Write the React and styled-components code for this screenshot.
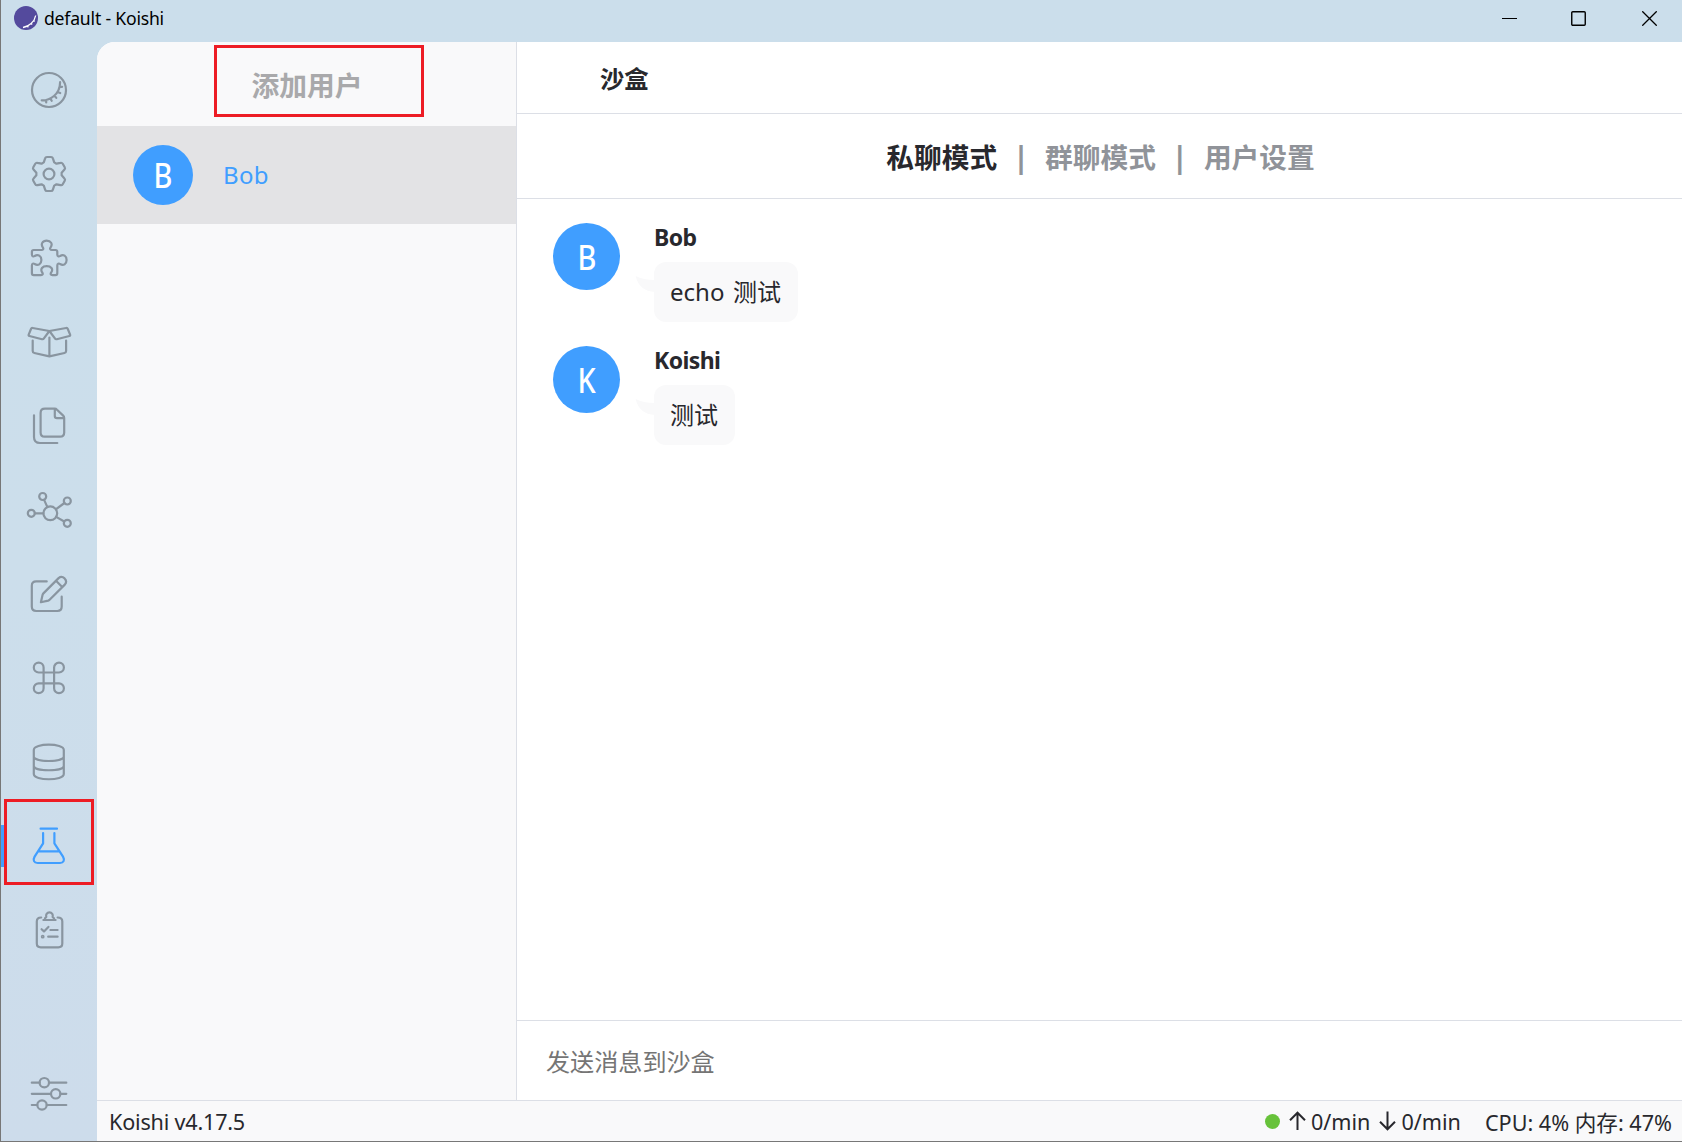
import React from 'react';
import styled, { createGlobalStyle } from 'styled-components';

const Global = createGlobalStyle`
  * { box-sizing: border-box; }
  body {
    margin: 0;
    overflow: hidden;
    font-family: "Noto Sans", "Noto Sans CJK SC", sans-serif;
    color: #28282d;
  }
`;

const Window = styled.div`
  width: 1682px;
  height: 1142px;
  display: flex;
  flex-direction: column;
  border-left: 1px solid #777;
  border-bottom: 1px solid #777;
  background: linear-gradient(180deg, #cbdeeb 0%, #ccdeeb 50%, #cddceb 100%);
`;

const TitleBar = styled.header`
  height: 42px;
  flex: none;
  display: flex;
  align-items: flex-start;
  justify-content: space-between;
  padding-left: 13px;
`;

const Brand = styled.div`
  display: flex;
  align-items: center;
  height: 36px;
  gap: 6px;
  color: #000;
  font-size: 17.6px;
  letter-spacing: -0.2px;
`;

const Controls = styled.div`
  display: flex;
  height: 37px;
  align-items: center;
`;

const Control = styled.div`
  width: ${(p) => p.$width}px;
  display: flex;
  justify-content: center;
`;

const Body = styled.div`
  flex: 1;
  display: flex;
  min-height: 0;
`;

const Nav = styled.nav`
  width: 96px;
  flex: none;
  display: flex;
  flex-direction: column;
  padding: 6px 0 5px;
`;

const NavItem = styled.div`
  position: relative;
  height: 84px;
  display: flex;
  align-items: center;
  justify-content: center;
  color: ${(p) => (p.$active ? '#409eff' : '#8995a0')};
  margin-top: ${(p) => (p.$last ? 'auto' : '0')};
`;

const Indicator = styled.i`
  position: absolute;
  left: 0;
  top: 21px;
  width: 5px;
  height: 42px;
  background: #409eff;
`;

const Highlight = styled.span`
  position: absolute;
  left: ${(p) => p.$x}px;
  top: ${(p) => p.$y}px;
  width: ${(p) => p.$w}px;
  height: ${(p) => p.$h}px;
  border: 3px solid #ed1c24;
`;

const Page = styled.div`
  flex: 1;
  display: flex;
  flex-direction: column;
  min-width: 0;
  background: #fff;
  border-top-left-radius: 18px;
  overflow: hidden;
`;

const Columns = styled.div`
  flex: 1;
  display: flex;
  min-height: 0;
`;

const Aside = styled.aside`
  width: 420px;
  flex: none;
  background: #f9f9fa;
  border-right: 1px solid #dcdfe6;
`;

const AddUser = styled.div`
  position: relative;
  height: 84px;
  display: flex;
  align-items: center;
  justify-content: center;
  padding: 1px 0 0 1px;
  font-size: 27.8px;
  font-weight: 700;
  line-height: 40px;
  color: #a9a9ab;
`;

const UserRow = styled.div`
  height: 98px;
  display: flex;
  align-items: center;
  gap: 30px;
  padding-left: 36px;
  background: #e3e3e5;
  color: #409eff;
  font-size: 24px;
`;

const UserName = styled.span`
  padding-bottom: 2px;
  letter-spacing: 0.3px;
`;

const Avatar = styled.div`
  width: ${(p) => p.$size}px;
  height: ${(p) => p.$size}px;
  flex: none;
  border-radius: 50%;
  background: #409eff;
  color: #fff;
  display: flex;
  align-items: center;
  justify-content: center;
  padding-top: 2px;
  font-family: "Noto Sans", sans-serif;
  font-size: 33.5px;
  font-weight: 500;
  line-height: 1;
`;

const Initial = styled.span`
  display: block;
  transform: scaleX(0.86);
`;

const Main = styled.main`
  flex: 1;
  display: flex;
  flex-direction: column;
  min-width: 0;
`;

const PageHeader = styled.div`
  height: 72px;
  flex: none;
  display: flex;
  align-items: center;
  padding: 0 0 0 83px;
  border-bottom: 1px solid #dcdfe6;
  font-size: 24.3px;
  font-weight: 700;
`;

const Tabs = styled.div`
  height: 85px;
  flex: none;
  display: flex;
  align-items: center;
  justify-content: center;
  padding: 2px 0 0 2px;
  border-bottom: 1px solid #dcdfe6;
  font-size: 27.7px;
  line-height: 40px;
  font-weight: 700;
  color: #909399;
`;

const Tab = styled.span`
  color: ${(p) => (p.$active ? '#28282d' : '#909399')};
`;

const Divider = styled.span`
  width: 48px;
  text-align: center;
  font-size: 30px;
`;

const Messages = styled.div`
  flex: 1;
  padding: 24px 36px;
`;

const Message = styled.div`
  display: flex;
  gap: 34px;
  height: 123px;
`;

const MessageBody = styled.div`
  display: flex;
  flex-direction: column;
  align-items: flex-start;
`;

const Sender = styled.div`
  height: 39px;
  line-height: 28px;
  font-size: 23px;
  font-weight: 700;
  letter-spacing: -0.6px;
`;

const Bubble = styled.div`
  position: relative;
  height: 60px;
  padding: 0 17px 0 16px;
  border-radius: 12px;
  background: #f9f9fa;
  font-size: 24px;
  line-height: 59px;
  word-spacing: 2.4px;
  white-space: nowrap;
`;

const Tail = styled.svg`
  position: absolute;
  left: -19px;
  top: 13px;
`;

const Composer = styled.div`
  height: 80px;
  flex: none;
  display: flex;
  align-items: center;
  padding: 0 0 0 29px;
  border-top: 1px solid #dcdfe6;
  font-size: 24.1px;
  color: #757575;
`;

const StatusBar = styled.footer`
  height: 41px;
  flex: none;
  display: flex;
  align-items: center;
  justify-content: space-between;
  padding: 0 10px 0 12px;
  border-top: 1px solid #dcdfe6;
  background: #f9f9fa;
  font-size: 21.6px;
  white-space: nowrap;
`;

const Version = styled.span`
  letter-spacing: -0.2px;
`;

const Metrics = styled.div`
  display: flex;
  align-items: center;
`;

const StatusDot = styled.i`
  width: 15px;
  height: 15px;
  margin-right: 9px;
  border-radius: 50%;
  background: #67c23a;
`;

const Rate = styled.span`
  display: flex;
  align-items: center;
  gap: 5px;
  margin-right: ${(p) => p.$after}px;
`;

const gearPath = (() => {
  const base = [
    ['L', -5.2, -11.6],
    ['L', -3.9, -15.6],
    ['Q', -3.5, -17, -2, -17],
    ['L', 2, -17],
    ['Q', 3.5, -17, 3.9, -15.6],
    ['L', 5.2, -11.6],
  ];
  let d = '';
  for (let k = 0; k < 6; k += 1) {
    const a = (k * Math.PI) / 3;
    base.forEach(([cmd, ...n], i) => {
      const out = [];
      for (let j = 0; j < n.length; j += 2) {
        out.push((24 + n[j] * Math.cos(a) - n[j + 1] * Math.sin(a)).toFixed(2));
        out.push((24 + n[j] * Math.sin(a) + n[j + 1] * Math.cos(a)).toFixed(2));
      }
      d += (k === 0 && i === 0 ? 'M' : cmd) + out.join(' ');
    });
  }
  return `${d}Z`;
})();

const icons = {
  home: (
    <>
      <circle cx="24" cy="24" r="17" />
      <path d="M16.7 34.4C25 34.6 35 28.5 35.1 16.2M21.2 34.2v2.3M25.4 32.6l1.3 2.2M29.5 29.7l1.8 2.2M32.6 26l2.6 1M34.7 20.8h2.4" />
    </>
  ),
  settings: (
    <>
      <path d={gearPath} />
      <circle cx="24" cy="24" r="5.4" />
    </>
  ),
  puzzle: (
    <path d="M8.7 16H16.4c1.8 0 2.4-1.3 1.4-2.6C15.5 10 17.5 6.7 21.7 6.7S28 10 25.6 13.4c-1 1.3-.4 2.6 1.4 2.6H30.5q1.8 0 1.8 1.8V20.6c0 1.8 1.5 2.4 2.8 1.4C38.4 19.8 41.6 22 41.6 26S38.4 32.3 35.1 30c-1.3-1-2.8-.4-2.8 1.4V39.3q0 1.8-1.8 1.8H27.4c-1.8 0-2.2-1.3-1.2-2.6C28.6 35 26 32.2 21.7 32.2S15 35 17.2 38.5c1 1.3.6 2.6-1.2 2.6H8.7q-1.8 0-1.8-1.8V31.4c0-1.8 1.5-2.4 2.8-1.4C13 32.3 16.4 30 16.4 26S13 19.7 9.7 22c-1.3 1-2.8.4-2.8-1.4V17.8Q6.9 16 8.7 16z" />
  ),
  box: (
    <path d="M7.6 10L24.4 13L18.9 20.4Q18.2 21.5 17 21.2L4.4 18Q3.3 17.7 3.7 16.6L6 11Q6.5 9.8 7.6 10zM41.2 10L24.4 13L29.9 20.4Q30.6 21.5 31.8 21.2L44.4 18Q45.5 17.7 45.1 16.6L42.8 11Q42.3 9.8 41.2 10zM7.7 22.6V33Q7.7 34.7 9.3 35L24.4 38.4L39.5 35Q41.1 34.7 41.1 33V22.6M24.4 19.6V38.4" />
  ),
  files: (
    <path d="M20 6.7H29.8Q31 6.7 32 7.7L38.2 13.6Q39.2 14.6 39.2 16V30.5Q39.2 34.7 35 34.7H19.6Q15.6 34.7 15.6 30.5V11Q15.6 6.7 20 6.7zM29.8 7V14Q29.8 16.2 32 16.2H39M9 13.3V35Q9 41 15 41H32.3" />
  ),
  network: (
    <>
      <circle cx="25.3" cy="27.3" r="6.9" />
      <circle cx="6.3" cy="27.3" r="3.5" />
      <circle cx="17.7" cy="10.5" r="3.5" />
      <circle cx="42.3" cy="15" r="3.5" />
      <circle cx="42.3" cy="37.3" r="3.5" />
      <path d="M9.8 27.3h8.6M19.1 13.9l3.2 7M39.4 17l-8.3 6.2M39.2 35.5l-8-4.6" />
    </>
  ),
  edit: (
    <path d="M21.7 11.4H11.2Q6.8 11.4 6.8 15.8V36.6Q6.8 41 11.2 41H32.3Q36.7 41 36.7 36.6V26.7M15.9 32.2L17.6 24.8Q17.8 24 18.4 23.4L33.6 8.1Q36.6 5.6 39.6 8.4Q42.5 11.4 39.8 14.6L24.6 29.8Q24 30.4 23.2 30.6zM31 10.8l6.2 6.2" />
  ),
  command: (
    <path d="M18.6 18.5H13.7A4.9 4.9 0 1 1 18.6 13.6V34.2A4.9 4.9 0 1 1 13.7 29.3H34A4.9 4.9 0 1 1 29.1 34.2V13.6A4.9 4.9 0 1 1 34 18.5z" />
  ),
  database: (
    <path d="M8.8 12C8.8 4.9 38.8 4.9 38.8 12V36C38.8 43 8.8 43 8.8 36zM8.8 18.8C10 24.4 37.6 24.4 38.8 18.8M8.8 28.2C10 33.6 37.6 33.6 38.8 28.2" />
  ),
  flask: (
    <path d="M15.6 6.7H32M18.1 11V21.3L9.6 34.6C7.6 38.2 9 41 12.6 41H35C38.6 41 40 38.2 38 34.6L29.4 21.3V11M13.2 29.3H34.3" />
  ),
  tasks: (
    <>
      <path d="M16.2 11.5Q11.8 11.5 11.8 15.5V37.5Q11.8 41.3 15.8 41.3H33.3Q37.3 41.3 37.3 37.5V15.5Q37.3 11.5 32.6 11.5M18.4 14H30.6M19.5 14Q20 11.6 21.3 11A3.4 3.4 0 1 1 27.6 11Q29 11.6 29.5 14M16.6 23.2l2.4 2.2l4.4-4.5M25.4 24H32.6M23.2 30.7H32.6" />
      <circle cx="17.7" cy="30.7" r="0.8" />
    </>
  ),
  sliders: (
    <>
      <path d="M6.8 12.7H14.6M24 12.7H41.3M6.8 23.8H26M35.4 23.8H41.3M6.8 35H12.3M21.7 35H41.3" />
      <circle cx="19.3" cy="12.7" r="4.7" />
      <circle cx="30.7" cy="23.8" r="4.7" />
      <circle cx="17" cy="35" r="4.7" />
    </>
  ),
};

const Icon = ({ name }) => (
  <svg width="48" height="48" viewBox="0 0 48 48" fill="none" stroke="currentColor" strokeWidth="2.2" strokeLinecap="round" strokeLinejoin="round">
    {icons[name]}
  </svg>
);

const navItems = ['home', 'settings', 'puzzle', 'box', 'files', 'network', 'edit', 'command', 'database', 'flask', 'tasks'];

const messages = [
  { initial: 'B', name: 'Bob', text: 'echo 测试' },
  { initial: 'K', name: 'Koishi', text: '测试' },
];

const Arrow = ({ down }) => (
  <svg width="17" height="20" viewBox="0 0 17 20" fill="none" stroke="#28282d" strokeWidth="2">
    <path d={down ? 'M8.5 0.5V18M1 10.8L8.5 18.3L16 10.8' : 'M8.5 19V2M1 9.2L8.5 1.7L16 9.2'} />
  </svg>
);

export default function App() {
  return (
    <>
      <Global />
      <Window>
        <TitleBar>
          <Brand>
            <svg width="24" height="24" viewBox="0 0 24 24">
              <circle cx="12" cy="12" r="12" fill="#544a9d" />
              <path d="M9 21.5C15 20.5 20.5 16 21.7 9.5M13.5 20l.8 1.3M17 17.6l1.2 1M19.3 14.6l1.4.8" fill="none" stroke="#fff" strokeWidth="1.3" />
            </svg>
            default - Koishi
          </Brand>
          <Controls>
            <Control $width={61}>
              <svg width="15" height="15"><path d="M0 7.5H15" stroke="#000" /></svg>
            </Control>
            <Control $width={77}>
              <svg width="15" height="15"><rect x="0.75" y="0.75" width="13.5" height="13.5" rx="1" fill="none" stroke="#000" strokeWidth="1.4" /></svg>
            </Control>
            <Control $width={65}>
              <svg width="15" height="15"><path d="M0.3 0.3L14.7 14.7M14.7 0.3L0.3 14.7" stroke="#000" strokeWidth="1.3" /></svg>
            </Control>
          </Controls>
        </TitleBar>
        <Body>
          <Nav>
            {navItems.map((name) => (
              <NavItem key={name} $active={name === 'flask'}>
                {name === 'flask' && <Indicator />}
                <Icon name={name} />
                {name === 'flask' && <Highlight $x={3} $y={-5} $w={90} $h={86} />}
              </NavItem>
            ))}
            <NavItem $last>
              <Icon name="sliders" />
            </NavItem>
          </Nav>
          <Page>
            <Columns>
              <Aside>
                <AddUser>
                  <span>添加用户</span>
                  <Highlight $x={117} $y={3} $w={210} $h={72} />
                </AddUser>
                <UserRow>
                  <Avatar $size={60}><Initial>B</Initial></Avatar>
                  <UserName>Bob</UserName>
                </UserRow>
              </Aside>
              <Main>
                <PageHeader>沙盒</PageHeader>
                <Tabs>
                  <Tab $active>私聊模式</Tab>
                  <Divider>|</Divider>
                  <Tab>群聊模式</Tab>
                  <Divider>|</Divider>
                  <Tab>用户设置</Tab>
                </Tabs>
                <Messages>
                  {messages.map((m) => (
                    <Message key={m.name}>
                      <Avatar $size={67}><Initial>{m.initial}</Initial></Avatar>
                      <MessageBody>
                        <Sender>{m.name}</Sender>
                        <Bubble>
                          <Tail width="20" height="18" viewBox="0 0 20 18">
                            <path d="M0.7 1Q8 5 20 5V17Q4 16 0.7 1z" fill="#f9f9fa" />
                          </Tail>
                          {m.text}
                        </Bubble>
                      </MessageBody>
                    </Message>
                  ))}
                </Messages>
                <Composer>发送消息到沙盒</Composer>
              </Main>
            </Columns>
            <StatusBar>
              <Version>Koishi v4.17.5</Version>
              <Metrics>
                <StatusDot />
                <Rate $after={9}><Arrow />0/min</Rate>
                <Rate $after={24}><Arrow down />0/min</Rate>
                <span>CPU: 4% 内存: 47%</span>
              </Metrics>
            </StatusBar>
          </Page>
        </Body>
      </Window>
    </>
  );
}
